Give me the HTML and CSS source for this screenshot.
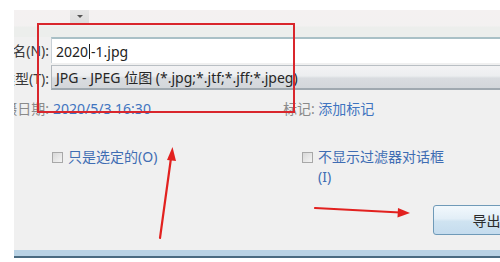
FILE: index.html
```html
<!DOCTYPE html>
<html lang="zh-CN">
<head>
<meta charset="utf-8">
<link rel="stylesheet" href="styles.css">
</head>
<body>
<div class="screen">
  <div class="strip"></div>
  <div class="dialog">
    <div class="topbar">
      <div class="tab"><span class="tri"></span></div>
    </div>
    <div class="form">
      <div class="label"><span>文件名(N):</span></div>
      <div class="input">2020<span class="caret"></span>-1.jpg</div>
      <div class="label"><span>保存类型(T):</span></div>
      <div class="combo">JPG - JPEG 位图 (*.jpg;*.jtf;*.jff;*.jpeg)</div>
      <div class="label meta-label"><span>拍摄日期:</span></div>
      <div class="meta">
        <span class="link">2020/5/3 16:30</span>
        <span class="tags"><span class="muted">标记:</span> <span class="link">添加标记</span></span>
      </div>
    </div>
    <div class="options">
      <label class="check check-a"><span class="box"></span><span class="check-text">只是选定的(O)</span></label>
      <label class="check check-b"><span class="box"></span><span class="check-text">不显示过滤器对话框<br>(I)</span></label>
    </div>
    <div class="actions">
      <div class="button">导出</div>
    </div>
    <div class="footer"></div>
  </div>
  <div class="highlight"></div>
  <svg class="arrows" width="500" height="262" viewBox="0 0 500 262">
    <line x1="160" y1="238" x2="171" y2="158" stroke="#e2211f" stroke-width="2.2" stroke-linecap="round"/>
    <polygon points="172.5,147 167,160 176,161" fill="#e2211f"/>
    <line x1="315" y1="208" x2="400" y2="212.5" stroke="#e2211f" stroke-width="2.2" stroke-linecap="round"/>
    <polygon points="410,213 398,208 397.5,217.5" fill="#e2211f"/>
  </svg>
</div>
</body>
</html>
```

FILE: styles.css
```css
* { box-sizing: border-box; }
html, body { margin: 0; padding: 0; background: #fff; }
body {
  font-family: "Noto Sans", "Noto Sans CJK SC", sans-serif;
  font-size: 14px;
  color: #2f2f2f;
}
.screen {
  position: relative;
  width: 500px;
  height: 262px;
  display: flex;
  overflow: hidden;
}
.strip { width: 14px; flex: none; background: #fff; }
.dialog {
  flex: 1;
  display: flex;
  flex-direction: column;
  overflow: hidden;
  background: #f0f0f0;
}
.topbar {
  height: 37px;
  flex: none;
  padding-left: 56px;
  padding-top: 10px;
  background: linear-gradient(#ffffff 0, #ffffff 10px, #f4f1f1 10px, #f3f1f1 26px, #eceeec 27px, #eceeec 37px);
}
.tab {
  width: 19px;
  height: 15px;
  background: linear-gradient(#e6e6e6, #dcdcdc);
  display: flex;
  justify-content: center;
  padding-top: 5px;
}
.tri {
  width: 0; height: 0;
  border-left: 3px solid transparent;
  border-right: 3px solid transparent;
  border-top: 3px solid #555;
}
.form {
  display: grid;
  grid-template-columns: 37px 1fr;
  grid-template-rows: 26px 25px 26px;
  row-gap: 2px;
}
.label {
  display: flex;
  justify-content: flex-end;
  align-items: center;
  white-space: nowrap;
  padding-right: 2px;
  color: #3a3a3a;
}
.input {
  background: #fff;
  border-top: 2px solid #a9c0c6;
  border-left: 1px solid #c8d0d6;
  display: flex;
  align-items: center;
  padding-left: 4px;
  white-space: nowrap;
  color: #222;
  margin-right: -20px;
}
.caret {
  display: inline-block;
  width: 1px;
  height: 15px;
  background: #222;
  margin: 0 1px;
}
.combo {
  background: linear-gradient(#f3f3f4 0%, #eceef0 45%, #d9dce0 55%, #d3d7db 100%);
  border-top: 1px solid #b9bfc4;
  border-bottom: 2px solid #a0a9b0;
  border-left: 1px solid #b0b6bb;
  display: flex;
  align-items: center;
  padding-left: 4px;
  white-space: nowrap;
  color: #262626;
  margin-right: -20px;
}
.meta-label { color: #8a8a8a; margin-top: 6px; }
.meta {
  display: flex;
  align-items: center;
  margin-top: 6px;
  padding-left: 2px;
  white-space: nowrap;
}
.link { color: #3f74c0; }
.muted { color: #8a8a8a; }
.tags { margin-left: 132px; }
.options {
  display: flex;
  margin-top: 29px;
  padding-left: 38px;
}
.check { display: flex; align-items: flex-start; color: #3f6db3; line-height: 20px; }
.check-a { width: 250px; }
.box {
  width: 11px;
  height: 11px;
  margin-top: 5px;
  margin-right: 5px;
  border: 1px solid #a8a8a8;
  background: linear-gradient(135deg, #d8d8d8, #f4f4f4);
  flex: none;
}
.actions {
  display: flex;
  justify-content: flex-end;
  margin-top: 18px;
  margin-right: -40px;
}
.button {
  width: 107px;
  height: 30px;
  border: 1px solid #6f9ab8;
  border-radius: 3px;
  background: linear-gradient(#f2f8fc 0%, #e2eef7 45%, #cfe3f1 55%, #c5dcee 100%);
  display: flex;
  align-items: center;
  justify-content: center;
  color: #2a2a2a;
}
.footer {
  margin-top: auto;
  height: 12px;
  background: linear-gradient(#b9d2e4 0, #b9d2e4 6px, #4a6a80 6px, #4a6a80 8px, #ffffff 8px);
}
.highlight {
  position: absolute;
  left: 37px;
  top: 23px;
  width: 258px;
  height: 90px;
  border: 2px solid #d9262c;
}
.arrows { position: absolute; left: 0; top: 0; pointer-events: none; }
```
